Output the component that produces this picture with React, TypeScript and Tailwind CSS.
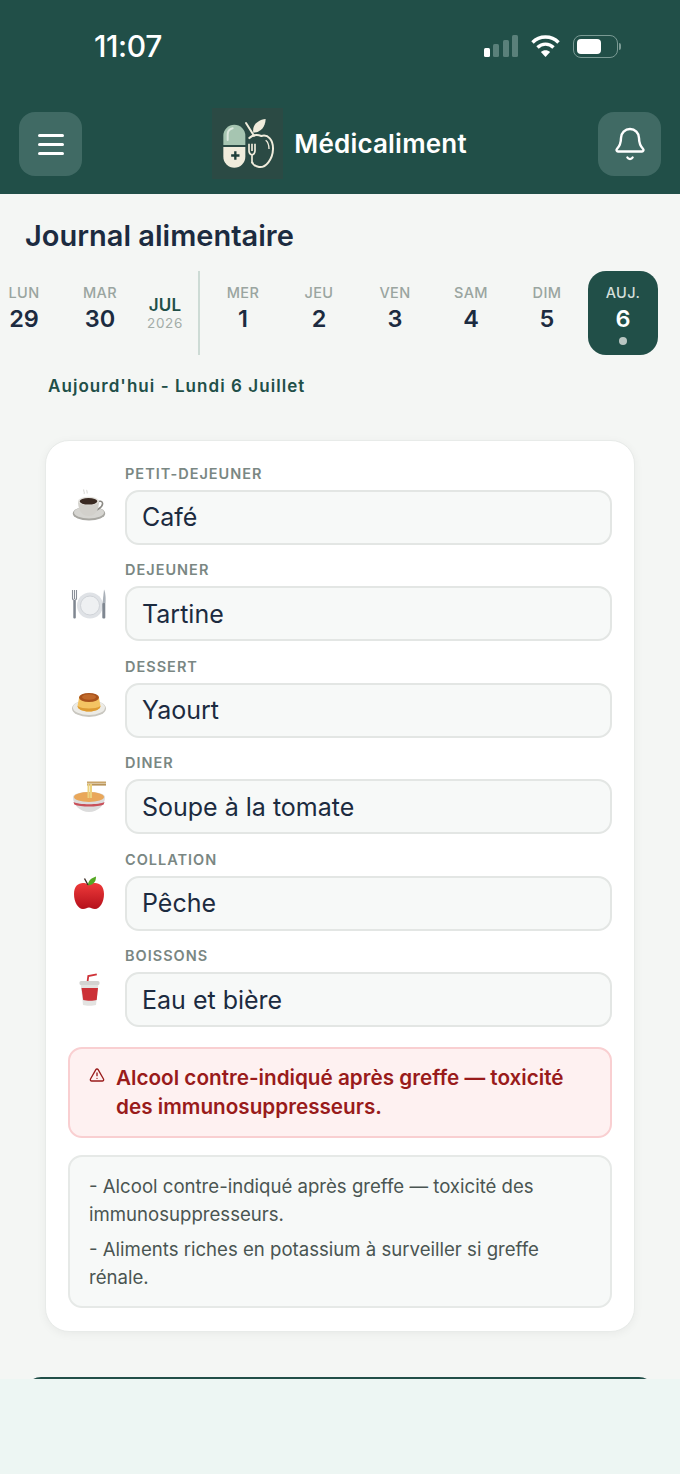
import React from "react";
import { Bell, TriangleAlert } from "lucide-react";

const Coffee = () => (
  <svg width="36" height="36" viewBox="0 0 36 36" className="overflow-visible">
    <path d="M13 2.500c-1.500 1.500 1.500 2.500 0 4.500M16 3c-1 1 1 2 0 3.500" stroke="#dcdcd9" strokeWidth="1.200" fill="none" />
    <ellipse cx="18" cy="26.500" rx="16.200" ry="7" fill="#a8a7a2" />
    <ellipse cx="18" cy="25.500" rx="15" ry="6" fill="#d6d5d1" />
    <path d="M26 15c6-3 8 3 1.500 7l-3 1.500" stroke="#8c8a85" strokeWidth="1.600" fill="none" />
    <path d="M7 14h21c0 8-3 15-10.500 15S7 22 7 14z" fill="#d2d0cb" />
    <ellipse cx="17.500" cy="14" rx="10.500" ry="4.300" fill="#e6e4df" />
    <ellipse cx="17.500" cy="14.300" rx="8.800" ry="3.300" fill="#3a2a22" />
  </svg>
);

const Plate = () => (
  <svg width="36" height="36" viewBox="0 0 36 36" className="overflow-visible">
    <circle cx="19" cy="21.500" r="13" fill="#dfe2e6" />
    <circle cx="19" cy="21.500" r="9.500" fill="#eef0f2" stroke="#c9cdd2" strokeWidth="0.800" />
    <path d="M1.500 6v9M3.500 6v9M5.500 6v9M1.500 14c0 3 4 3 4 0" stroke="#8a8f98" strokeWidth="1.100" fill="none" />
    <rect x="2.300" y="16" width="2.500" height="18.500" rx="1" fill="#7f8791" />
    <path d="M33 5.500c1.800 3 1.800 11 1.500 14h-3z" fill="#a9b0b8" />
    <rect x="31.300" y="19" width="3" height="15.500" rx="1" fill="#7f8791" />
  </svg>
);

const Flan = () => (
  <svg width="36" height="36" viewBox="0 0 36 36" className="overflow-visible">
    <ellipse cx="18" cy="28.500" rx="17" ry="8.500" fill="#c9c7c0" />
    <ellipse cx="18" cy="27.500" rx="16" ry="7.500" fill="#ecebe6" />
    <path d="M8 18c0-2 3-4 10-4s10 2 10 4l1.500 8c0 3-5 5.500-11.500 5.500S6.500 29 6.500 26z" fill="#f4c463" />
    <path d="M18 31.500c-6.500 0-11.500-2.500-11.500-5.500 3 1.800 7 2.500 11.500 2.500s8.500-.700 11.500-2.500c0 3-5 5.500-11.500 5.500z" fill="#dd9b33" />
    <ellipse cx="18" cy="17.500" rx="10" ry="4.500" fill="#a9521b" />
    <ellipse cx="18" cy="17" rx="7" ry="2.800" fill="#c0692a" />
  </svg>
);

const Noodles = () => (
  <svg width="36" height="36" viewBox="0 0 36 36" className="overflow-visible">
    <rect x="16" y="4.500" width="19" height="2" fill="#c9a468" />
    <rect x="16" y="6.800" width="19" height="1.800" fill="#b8945a" />
    <path d="M2 20c0-3 7-5 16-5s16 2 16 5c0 8-7 15-16 15S2 28 2 20z" fill="#dcdcdc" />
    <ellipse cx="18" cy="20" rx="15" ry="5" fill="#e9a75a" />
    <path d="M17.500 7v14M20 7v14" stroke="#ecd27e" strokeWidth="2" />
    <path d="M2.500 25c5 3 26 3 31 0l-.800 2.500c-6 2.800-23 2.800-29.400 0z" fill="#c9505a" />
  </svg>
);

const Apple = () => (
  <svg width="36" height="36" viewBox="0 0 36 36" className="overflow-visible">
    <defs>
      <linearGradient id="appleFill" x1="0" y1="0" x2="0" y2="1">
        <stop offset="0" stopColor="#ee3a3a" />
        <stop offset="1" stopColor="#b5101b" />
      </linearGradient>
    </defs>
    <path d="M18 12C12 8 3 10 3 21c0 8 4 15 9 15 3 0 4-1.500 6-1.500s3 1.500 6 1.500c5 0 9-7 9-15C33 10 24 8 18 12z" fill="url(#appleFill)" />
    <path d="M17 12c0-4 3-7 8-8.500 0 5-2 8-8 9z" fill="#55a823" />
    <path d="M13.500 5.500l3.500 6.500" stroke="#3a2a22" strokeWidth="1.400" />
  </svg>
);

const Cup = () => (
  <svg width="36" height="36" viewBox="0 0 36 36" className="overflow-visible">
    <path d="M16.500 12l.8-6 8.500-1.700" stroke="#cf3238" strokeWidth="1.800" fill="none" />
    <path d="M9.500 13h18l-2.500 22c-3 1-10 1-13 0z" fill="#e3e3e1" />
    <rect x="8.500" y="11" width="20" height="4" rx="1.500" fill="#d3d3d1" />
    <path d="M10.500 18h16.500l-1.300 12c-3 1-10 1-13.500 0z" fill="#cc3137" />
  </svg>
);

const Logo = () => (
  <svg width="64" height="64" viewBox="0 0 192 192">
    <path d="M22 99V71a33 33 0 0 1 66 0v28z" fill="#a6c5b1" />
    <path d="M22 105h66v29a33 33 0 0 1-66 0z" fill="#f0ecdc" />
    <path d="M35 84V68c0-10 6-17 15-19" stroke="#dbe8de" strokeWidth="6" fill="none" strokeLinecap="round" />
    <path d="M58 118v25M45.500 130.500h25" stroke="#1f3f3a" strokeWidth="7" fill="none" />
    <path d="M90 33l24 38" stroke="#f0ecdc" strokeWidth="6" strokeLinecap="round" />
    <path d="M112 62c-4-22 12-38 37-41-1 24-14 40-37 41z" fill="#f0ecdc" />
    <path d="M98 80c12-12 28-12 38-8 20-6 36 12 35 40-1 30-22 56-42 53-10-1-19-8-21-16" stroke="#f0ecdc" strokeWidth="6" fill="none" />
    <path d="M149 85c8 6 10 16 10 26" stroke="#f0ecdc" strokeWidth="4" fill="none" />
    <path d="M99 95v22c0 7 4 10 9 12v25M108 95v22M117 95v22c0 7-4 10-9 12" stroke="#f0ecdc" strokeWidth="5" fill="none" />
  </svg>
);

const StatusIcons = () => (
  <div className="flex items-center gap-[12px]">
    <div className="flex items-end gap-[3.500px] h-[23px] pb-px">
      <div className="w-[6px] h-[9px] rounded-[1.500px] bg-white" />
      <div className="w-[6px] h-[13px] rounded-[1.500px] bg-[#5a807a]" />
      <div className="w-[6px] h-[17px] rounded-[1.500px] bg-[#5a807a]" />
      <div className="w-[6px] h-[22px] rounded-[1.500px] bg-[#5a807a]" />
    </div>
    <svg width="31" height="24" viewBox="0 0 30 24" fill="none" stroke="#fff" strokeWidth="3.400">
      <path d="M2 8.500c7-7.300 19-7.300 26 0M7 13.500c4.500-4.500 11.500-4.500 16 0" />
      <path d="M15 23l-4.600-5c2.500-2.500 6.700-2.500 9.200 0z" fill="#fff" stroke="none" />
    </svg>
    <div className="flex items-center gap-px">
      <div className="w-[45px] h-[23px] rounded-[8px] border-[1.500px] border-[#7a9a94] p-[3px] flex">
        <div className="w-[24px] h-full rounded-[4px] bg-white" />
      </div>
      <div className="w-[2px] h-[7px] rounded-r-full bg-[#7a9a94]" />
    </div>
  </div>
);

const Day = ({ d, n, active }: { d: string; n: string; active?: boolean }) => (
  <div
    className={
      "w-[70px] h-[84px] shrink-0 flex flex-col items-center pt-[13px] rounded-[18px] " +
      (active ? "bg-[#214f48]" : "")
    }
  >
    <div className={"text-[14.500px] leading-[18px] font-medium tracking-[0.4px] " + (active ? "text-[#d4dfdb]" : "text-[#9aa5a0]")}>{d}</div>
    <div className={"text-[23.500px] leading-[30px] mt-[2px] font-semibold " + (active ? "text-white" : "text-[#1c2b40]")}>{n}</div>
    {active && <div className="w-[8px] h-[8px] rounded-full bg-[#b9c6c2] mt-[3px]" />}
  </div>
);

const meals = [
  { label: "PETIT-DEJEUNER", value: "Café", Icon: Coffee },
  { label: "DEJEUNER", value: "Tartine", Icon: Plate },
  { label: "DESSERT", value: "Yaourt", Icon: Flan },
  { label: "DINER", value: "Soupe à la tomate", Icon: Noodles },
  { label: "COLLATION", value: "Pêche", Icon: Apple },
  { label: "BOISSONS", value: "Eau et bière", Icon: Cup },
];

export default function App() {
  return (
    <div className="w-[680px] h-[1474px] overflow-hidden flex flex-col bg-[#f4f6f4] font-['Inter',sans-serif] text-[#1c2b40]">
      <header className="h-[194px] shrink-0 bg-[#214f48] flex flex-col">
        <div className="h-[108px] flex items-start justify-between pt-[30px] pl-[94px] pr-[59px]">
          <div className="text-white text-[30px] leading-[32px] font-medium tracking-[-0.4px]">11:07</div>
          <div className="pt-[4px]"><StatusIcons /></div>
        </div>
        <div className="flex items-start justify-between px-[19px]">
          <button className="mt-[4px] w-[63px] h-[64px] rounded-[16px] bg-[#406a64] flex flex-col items-center justify-center gap-[6px]">
            <span className="w-[26px] h-[3px] rounded-full bg-white" />
            <span className="w-[26px] h-[3px] rounded-full bg-white" />
            <span className="w-[26px] h-[3px] rounded-full bg-white" />
          </button>
          <div className="flex items-center gap-[11px] -ml-[1px]">
            <div className="w-[71px] h-[71px] bg-[#2b4a44] flex items-center justify-center"><Logo /></div>
            <div className="text-white text-[26px] leading-[32px] font-semibold tracking-[0.2px]">Médicaliment</div>
          </div>
          <button className="mt-[4px] w-[63px] h-[64px] rounded-[16px] bg-[#406a64] flex items-center justify-center">
            <Bell size={36} color="#fff" strokeWidth={1.600} />
          </button>
        </div>
      </header>

      <main className="flex-1 min-h-0 overflow-hidden flex flex-col">
        <h1 className="mt-[24px] ml-[25px] text-[29px] leading-[36px] font-semibold">Journal alimentaire</h1>
        <div className="mt-[17px] -ml-[11px] flex items-stretch gap-[6px]">
          <Day d="LUN" n="29" />
          <Day d="MAR" n="30" />
          <div className="w-[48px] flex flex-col items-center pt-[24px]">
            <div className="text-[17px] leading-[20px] font-semibold text-[#214f48] tracking-[0.2px]">JUL</div>
            <div className="text-[13.500px] leading-[17px] text-[#a3ada8] tracking-[0.6px]">2026</div>
          </div>
          <div className="w-[2px] ml-[3px] mr-[2px] bg-[#cddbd5]" />
          <Day d="MER" n="1" />
          <Day d="JEU" n="2" />
          <Day d="VEN" n="3" />
          <Day d="SAM" n="4" />
          <Day d="DIM" n="5" />
          <Day d="AUJ." n="6" active />
        </div>
        <div className="mt-[20px] ml-[48px] text-[17px] leading-[22px] font-semibold text-[#214f48] tracking-[1.050px]">
          Aujourd'hui - Lundi 6 Juillet
        </div>

        <section className="mt-[43px] mx-[45px] h-[892px] shrink-0 bg-white rounded-[24px] border border-[#e8ebe9] shadow-[0_2px_10px_rgba(0,0,0,0.05)] px-[22px] pt-[23.500px]">
          <div className="flex flex-col gap-[16.500px]">
            {meals.map(({ label, value, Icon }) => (
              <div key={label} className="flex items-center">
                <div className="w-[57px] pr-[17px] pl-[2px] flex justify-center pt-[1px] shrink-0"><Icon /></div>
                <div className="flex-1 min-w-0">
                  <div className="text-[14.500px] leading-[17px] font-semibold text-[#7a8783] tracking-[1px]">{label}</div>
                  <div className="mt-[8px] h-[55px] rounded-[14px] border-2 border-[#e3e6e4] bg-[#f7f9f8] flex items-center px-[15px] pt-[2px] text-[25px] text-[#1c2b40]">
                    {value}
                  </div>
                </div>
              </div>
            ))}
          </div>
          <div className="mt-[19.500px] h-[91px] rounded-[14px] border-2 border-[#f9cfd1] bg-[#fef1f1] flex pl-[19px] pr-[16px] pt-[14px] text-[#991b1b]">
            <TriangleAlert size={16} strokeWidth={2} className="mt-[4px] shrink-0" />
            <div className="ml-[11px] text-[20.700px] leading-[29px] font-semibold">
              Alcool contre-indiqué après greffe — toxicité des immunosuppresseurs.
            </div>
          </div>
          <div className="mt-[17px] h-[153px] rounded-[14px] border-2 border-[#e6e9e7] bg-[#f7f9f8] px-[19px] pt-[15px] text-[18.600px] leading-[28.500px] text-[#4a5552]">
            <p>- Alcool contre-indiqué après greffe — toxicité des immunosuppresseurs.</p>
            <p className="mt-[6px]">- Aliments riches en potassium à surveiller si greffe rénale.</p>
          </div>
        </section>

        <div className="mt-[45px] mx-[25px] h-[40px] shrink-0 rounded-t-[16px] bg-[#214f48]" />
      </main>

      <footer className="h-[95px] shrink-0 bg-[#edf6f3]" />
    </div>
  );
}
